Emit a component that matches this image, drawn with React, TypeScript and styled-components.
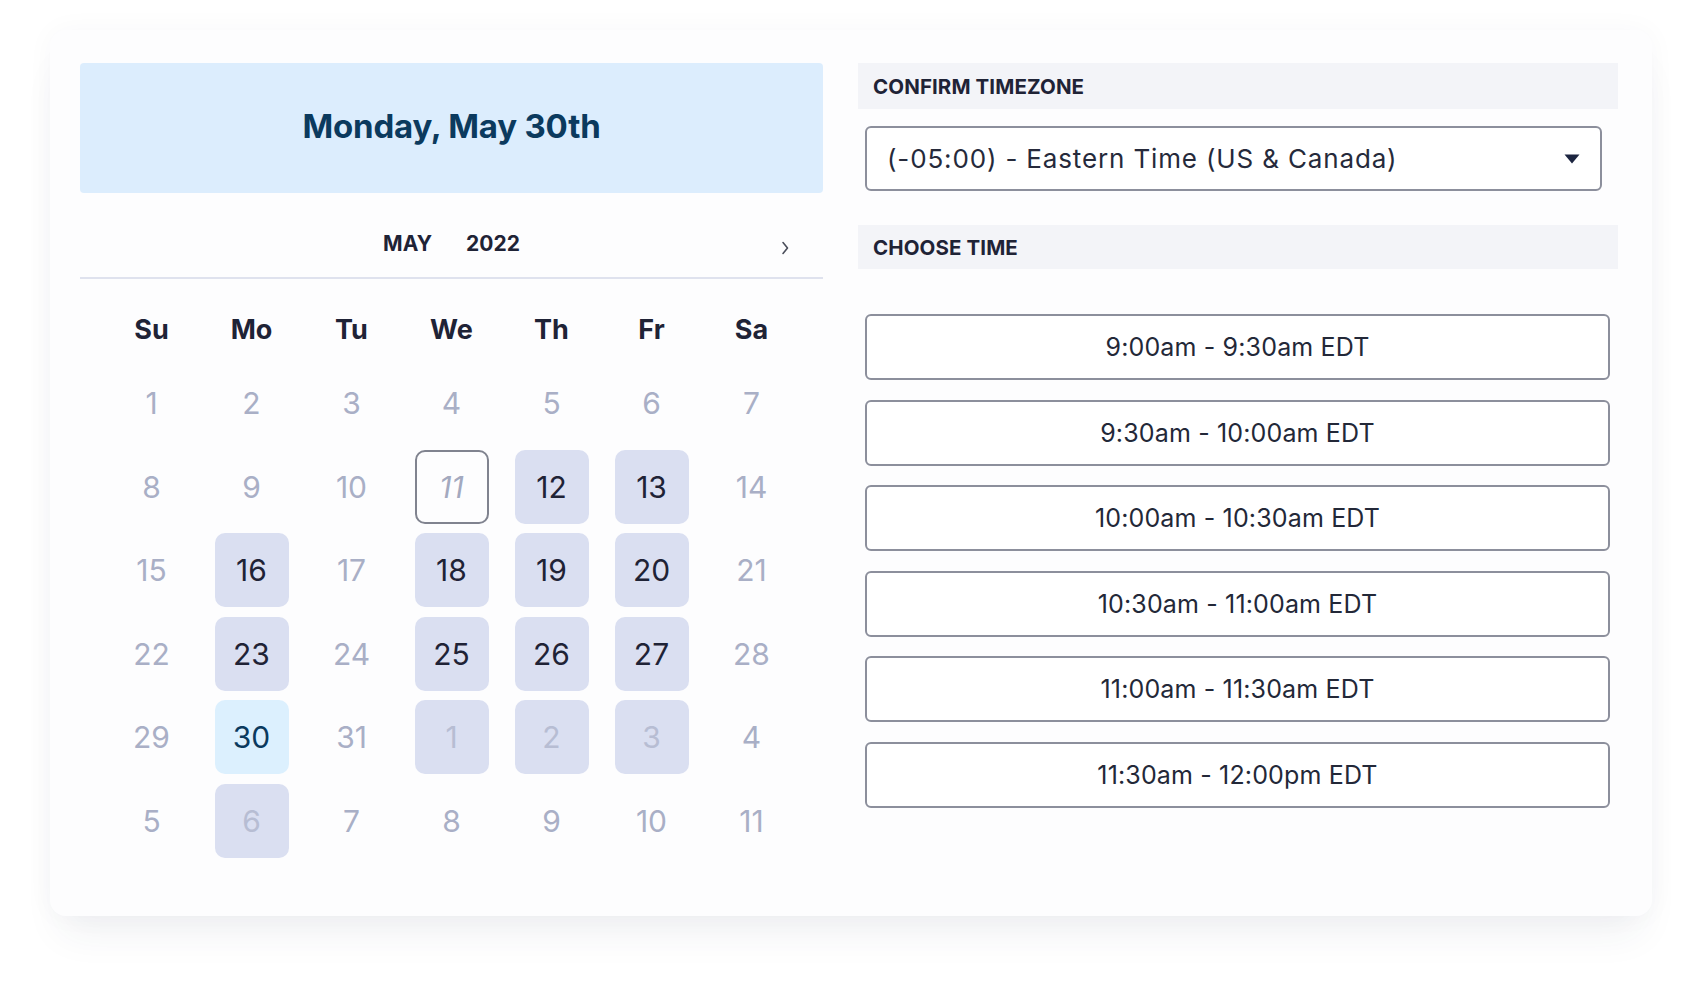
import React from "react";
import styled, { createGlobalStyle, css } from "styled-components";

const GlobalStyle = createGlobalStyle`
  body {
    margin: 0;
    background: #ffffff;
    font-family: Inter, "Noto Sans", sans-serif;
    color: #1f2336;
  }
`;

type DayKind = "off" | "open" | "today" | "selected" | "next";

const weekdays = ["Su", "Mo", "Tu", "We", "Th", "Fr", "Sa"];

const o = (n: number): [number, DayKind] => [n, "off"];
const a = (n: number): [number, DayKind] => [n, "open"];
const x = (n: number): [number, DayKind] => [n, "next"];

const days: [number, DayKind][] = [
  o(1), o(2), o(3), o(4), o(5), o(6), o(7),
  o(8), o(9), o(10), [11, "today"], a(12), a(13), o(14),
  o(15), a(16), o(17), a(18), a(19), a(20), o(21),
  o(22), a(23), o(24), a(25), a(26), a(27), o(28),
  o(29), [30, "selected"], o(31), x(1), x(2), x(3), o(4),
  o(5), x(6), o(7), o(8), o(9), o(10), o(11),
];

const slots = [
  "9:00am - 9:30am EDT",
  "9:30am - 10:00am EDT",
  "10:00am - 10:30am EDT",
  "10:30am - 11:00am EDT",
  "11:00am - 11:30am EDT",
  "11:30am - 12:00pm EDT",
];

const App = () => {
  return (
    <Page>
      <GlobalStyle />
      <Card>
        <CalendarSide>
          <DateBanner>Monday, May 30th</DateBanner>
          <MonthBar>
            <MonthLabel>
              <span>MAY</span>
              <span>2022</span>
            </MonthLabel>
            <NextButton aria-label="next month">
              <svg width="9" height="16" viewBox="0 0 9 16">
                <path
                  d="M2 2.5 L6.5 8 L2 13.5"
                  fill="none"
                  stroke="#4a4d5a"
                  strokeWidth="1.6"
                  strokeLinecap="round"
                  strokeLinejoin="round"
                />
              </svg>
            </NextButton>
          </MonthBar>
          <WeekRow>
            {weekdays.map((d) => (
              <WeekDay key={d}>{d}</WeekDay>
            ))}
          </WeekRow>
          <DayGrid>
            {days.map(([n, kind], i) => (
              <DayCell key={i} $kind={kind}>
                {n}
              </DayCell>
            ))}
          </DayGrid>
        </CalendarSide>

        <TimeSide>
          <SectionBar>CONFIRM TIMEZONE</SectionBar>
          <ZoneSelect>
            <span>(-05:00) - Eastern Time (US &amp; Canada)</span>
            <svg width="16" height="10" viewBox="0 0 16 10">
              <path d="M0.5 0.5 H15.5 L8 9.5 Z" fill="#1c2540" />
            </svg>
          </ZoneSelect>
          <SectionBar $gap>CHOOSE TIME</SectionBar>
          <SlotList>
            {slots.map((s) => (
              <SlotButton key={s}>{s}</SlotButton>
            ))}
          </SlotList>
        </TimeSide>
      </Card>
    </Page>
  );
};

export default App;

const Page = styled.div`
  padding: 30px 50px 70px;
`;

const Card = styled.div`
  display: flex;
  gap: 35px;
  padding: 33px 34px 58px 30px;
  background: #fdfdfe;
  border-radius: 16px;
  box-shadow: 0 28px 40px -12px rgba(40, 50, 90, 0.07),
    0 0 28px rgba(40, 50, 90, 0.035);
`;

const CalendarSide = styled.div`
  width: 743px;
  display: flex;
  flex-direction: column;
`;

const DateBanner = styled.div`
  height: 130px;
  box-sizing: border-box;
  padding-bottom: 4px;
  display: flex;
  align-items: center;
  justify-content: center;
  background: #dcedfd;
  border-radius: 4px;
  color: #0b3a5e;
  font-size: 33px;
  font-weight: 700;
  letter-spacing: -0.2px;
`;

const MonthBar = styled.div`
  position: relative;
  height: 86px;
  border-bottom: 2px solid #dfe2ee;
  display: flex;
  justify-content: center;
  padding-top: 38px;
  box-sizing: border-box;
`;

const MonthLabel = styled.div`
  display: flex;
  gap: 34px;
  height: 26px;
  line-height: 26px;
  font-size: 21px;
  font-weight: 700;
  color: #1f2336;
`;

const NextButton = styled.button`
  position: absolute;
  right: 33px;
  top: 47px;
  border: 0;
  background: none;
  padding: 0;
  display: flex;
  cursor: pointer;
`;

const WeekRow = styled.div`
  margin-top: 30px;
  display: grid;
  grid-template-columns: repeat(7, 100px);
  justify-content: center;
  height: 40px;
  align-items: center;
`;

const WeekDay = styled.div`
  text-align: center;
  font-size: 27px;
  font-weight: 700;
  color: #1f2336;
`;

const DayGrid = styled.div`
  margin-top: 17px;
  display: grid;
  grid-template-columns: repeat(7, 100px);
  grid-auto-rows: 74px;
  row-gap: 9.6px;
  justify-content: center;
  justify-items: center;
`;

const kindStyles: Record<DayKind, ReturnType<typeof css>> = {
  off: css`
    color: #a9afc6;
  `,
  open: css`
    background: #dadff1;
    color: #1f2336;
  `,
  today: css`
    border: 2px solid #80838f;
    color: #a3a9bf;
    font-style: italic;
  `,
  selected: css`
    background: #dcf0fe;
    color: #0b3a5e;
  `,
  next: css`
    background: #dadff1;
    color: #b7bdd3;
  `,
};

const DayCell = styled.div<{ $kind: DayKind }>`
  width: 74px;
  height: 74px;
  box-sizing: border-box;
  border-radius: 10px;
  display: flex;
  align-items: center;
  justify-content: center;
  font-size: 30px;
  font-weight: 400;
  ${(p) => kindStyles[p.$kind]}
`;

const TimeSide = styled.div`
  flex: 1;
  display: flex;
  flex-direction: column;
`;

const SectionBar = styled.div<{ $gap?: boolean }>`
  height: ${(p) => (p.$gap ? "44px" : "46px")};
  margin-top: ${(p) => (p.$gap ? "34px" : "0")};
  display: flex;
  align-items: center;
  padding-left: 15px;
  background: #f3f4f8;
  font-size: 20.5px;
  font-weight: 700;
  color: #1f2336;
  letter-spacing: 0.1px;
`;

const ZoneSelect = styled.div`
  margin: 17px 16px 0 7px;
  height: 65px;
  box-sizing: border-box;
  border: 2px solid #8c8f9c;
  border-radius: 6px;
  background: #ffffff;
  display: flex;
  align-items: center;
  justify-content: space-between;
  padding: 0 20px 0 20px;
  font-size: 26px;
  letter-spacing: 0.85px;
  color: #262a3b;
`;

const SlotList = styled.div`
  margin: 45px 8px 0 7px;
  display: flex;
  flex-direction: column;
  gap: 19.6px;
`;

const SlotButton = styled.button`
  height: 66px;
  border: 2px solid #8c8f9c;
  border-radius: 6px;
  background: #ffffff;
  font-family: Inter, "Noto Sans", sans-serif;
  font-size: 25px;
  letter-spacing: 0.15px;
  color: #232838;
  cursor: pointer;
`;
